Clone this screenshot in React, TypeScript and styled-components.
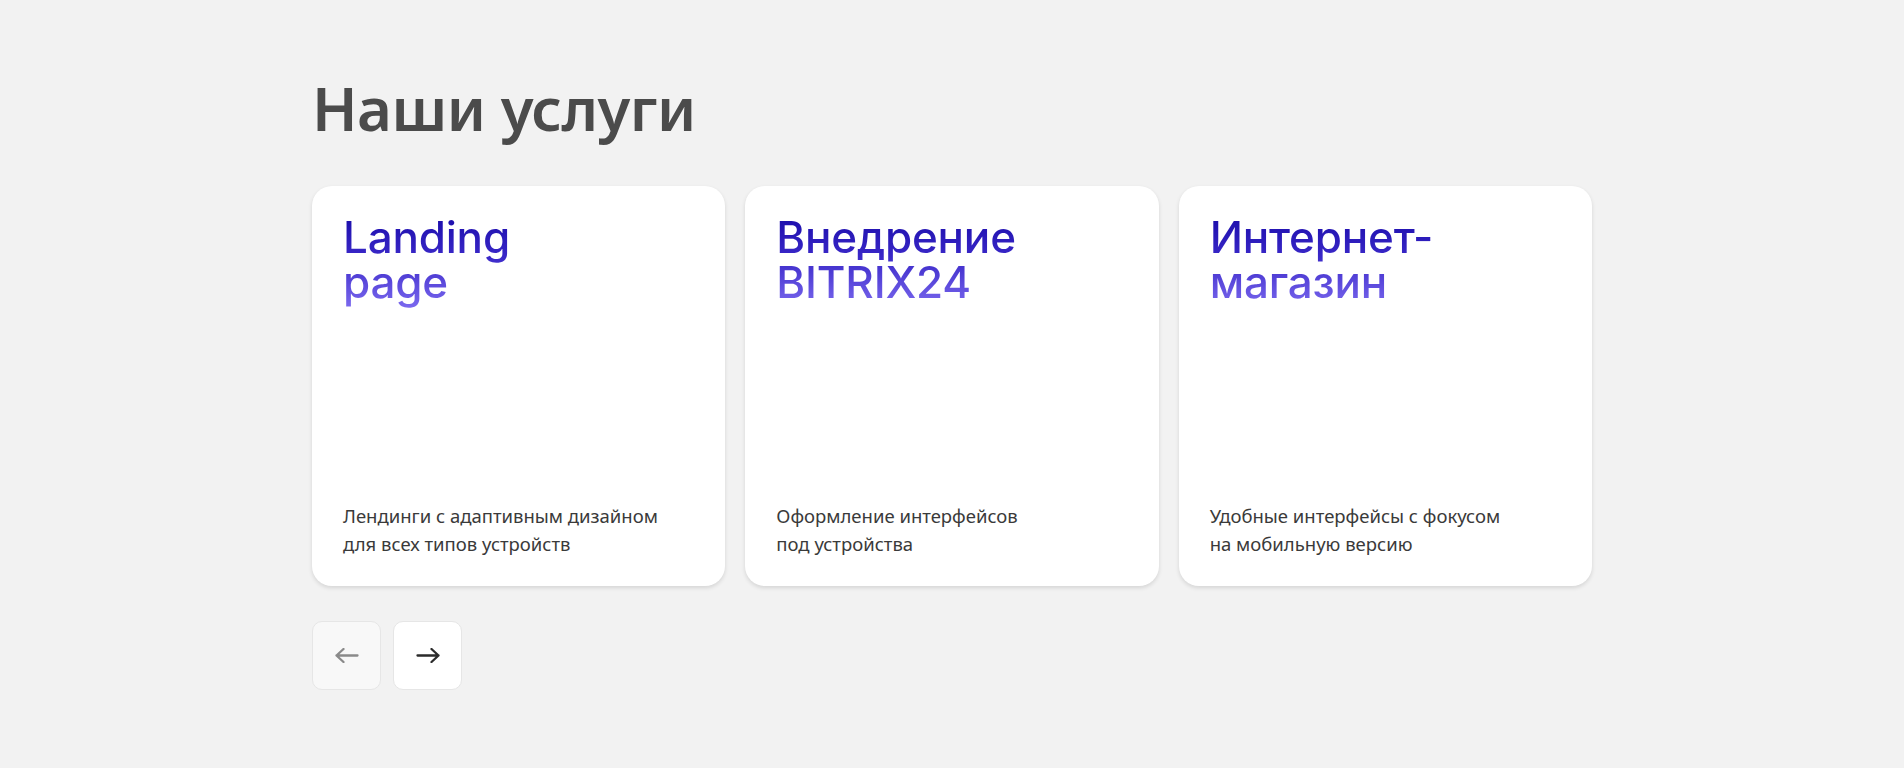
import React from 'react';
import styled, {createGlobalStyle} from 'styled-components';

const GlobalStyle = createGlobalStyle`
	html, body {
		margin: 0;
		padding: 0;
		background: #f2f2f2;
	}
	body {
		font-family: "Noto Sans", "Open Sans", sans-serif;
	}
`;

const Page = styled.main`
	min-height: 768px;
	background: #f2f2f2;
`;

const Section = styled.section`
	width: 1280px;
	margin: 0 auto;
	padding-top: 68px;
`;

const Heading = styled.h2`
	margin: 0 0 38px;
	font-family: "Noto Sans", sans-serif;
	font-weight: 600;
	font-size: 60px;
	line-height: 80px;
	color: #4b4b4b;
	letter-spacing: -0.5px;
`;

const Track = styled.div`
	display: grid;
	grid-template-columns: repeat(3, 1fr);
	gap: 20px;
`;

const Card = styled.article`
	height: 400px;
	box-sizing: border-box;
	padding: 29px 31px 28px;
	background: #fff;
	border-radius: 20px;
	box-shadow: 0 2px 4px rgba(0, 0, 0, 0.12);
	display: flex;
	flex-direction: column;
	justify-content: space-between;
`;

const Title = styled.h3`
	margin: 0;
	padding-bottom: 10px;
	font-family: Inter, sans-serif;
	font-weight: 500;
	font-size: 44px;
	line-height: 45px;
	letter-spacing: -0.2px;
	background: linear-gradient(180deg, #1a0caa 0%, #3a28c8 42%, #7a68ee 92%);
	-webkit-background-clip: text;
	background-clip: text;
	color: transparent;
	display: inline-block;
	align-self: flex-start;
`;

const Text = styled.p`
	margin: 0;
	font-family: "Noto Sans", sans-serif;
	font-size: 18.5px;
	line-height: 28px;
	color: #3a3a3a;
`;

const Controls = styled.div`
	display: flex;
	gap: 12px;
	margin-top: 35px;
`;

const NavButton = styled.button<{$disabled?: boolean}>`
	box-sizing: border-box;
	width: 69px;
	height: 69px;
	border-radius: 10px;
	border: 1px solid #e6e6e6;
	background: ${p => (p.$disabled ? '#f8f8f8' : '#fff')};
	color: ${p => (p.$disabled ? '#8a8a8a' : '#2b2b2b')};
	display: flex;
	align-items: center;
	justify-content: center;
	padding: 0;
	cursor: ${p => (p.$disabled ? 'default' : 'pointer')};
`;

const Arrow = ({flip}: {flip?: boolean}) => (
	<svg
		width="24"
		height="15"
		viewBox="0 0 24 15"
		fill="none"
		stroke="currentColor"
		strokeWidth="2.3"
		strokeLinecap="round"
		strokeLinejoin="round"
		style={flip ? {transform: 'scaleX(-1)'} : undefined}
	>
		<path d="M1.5 7.5H22.5M15.5 1L22.5 7.5L15.5 14" />
	</svg>
);

const services = [
	{top: 'Landing', bottom: 'page', text: ['Лендинги с адаптивным дизайном', 'для всех типов устройств']},
	{top: 'Внедрение', bottom: 'BITRIX24', text: ['Оформление интерфейсов', 'под устройства']},
	{top: 'Интернет-', bottom: 'магазин', text: ['Удобные интерфейсы с фокусом', 'на мобильную версию']},
];

export default function App() {
	return (
		<Page>
			<GlobalStyle />
			<Section>
				<Heading>Наши услуги</Heading>
				<Track>
					{services.map(s => (
						<Card key={s.top}>
							<Title>
								{s.top}
								<br />
								{s.bottom}
							</Title>
							<Text>
								{s.text[0]}
								<br />
								{s.text[1]}
							</Text>
						</Card>
					))}
				</Track>
				<Controls>
					<NavButton $disabled aria-label="Назад">
						<Arrow flip />
					</NavButton>
					<NavButton aria-label="Вперёд">
						<Arrow />
					</NavButton>
				</Controls>
			</Section>
		</Page>
	);
}
